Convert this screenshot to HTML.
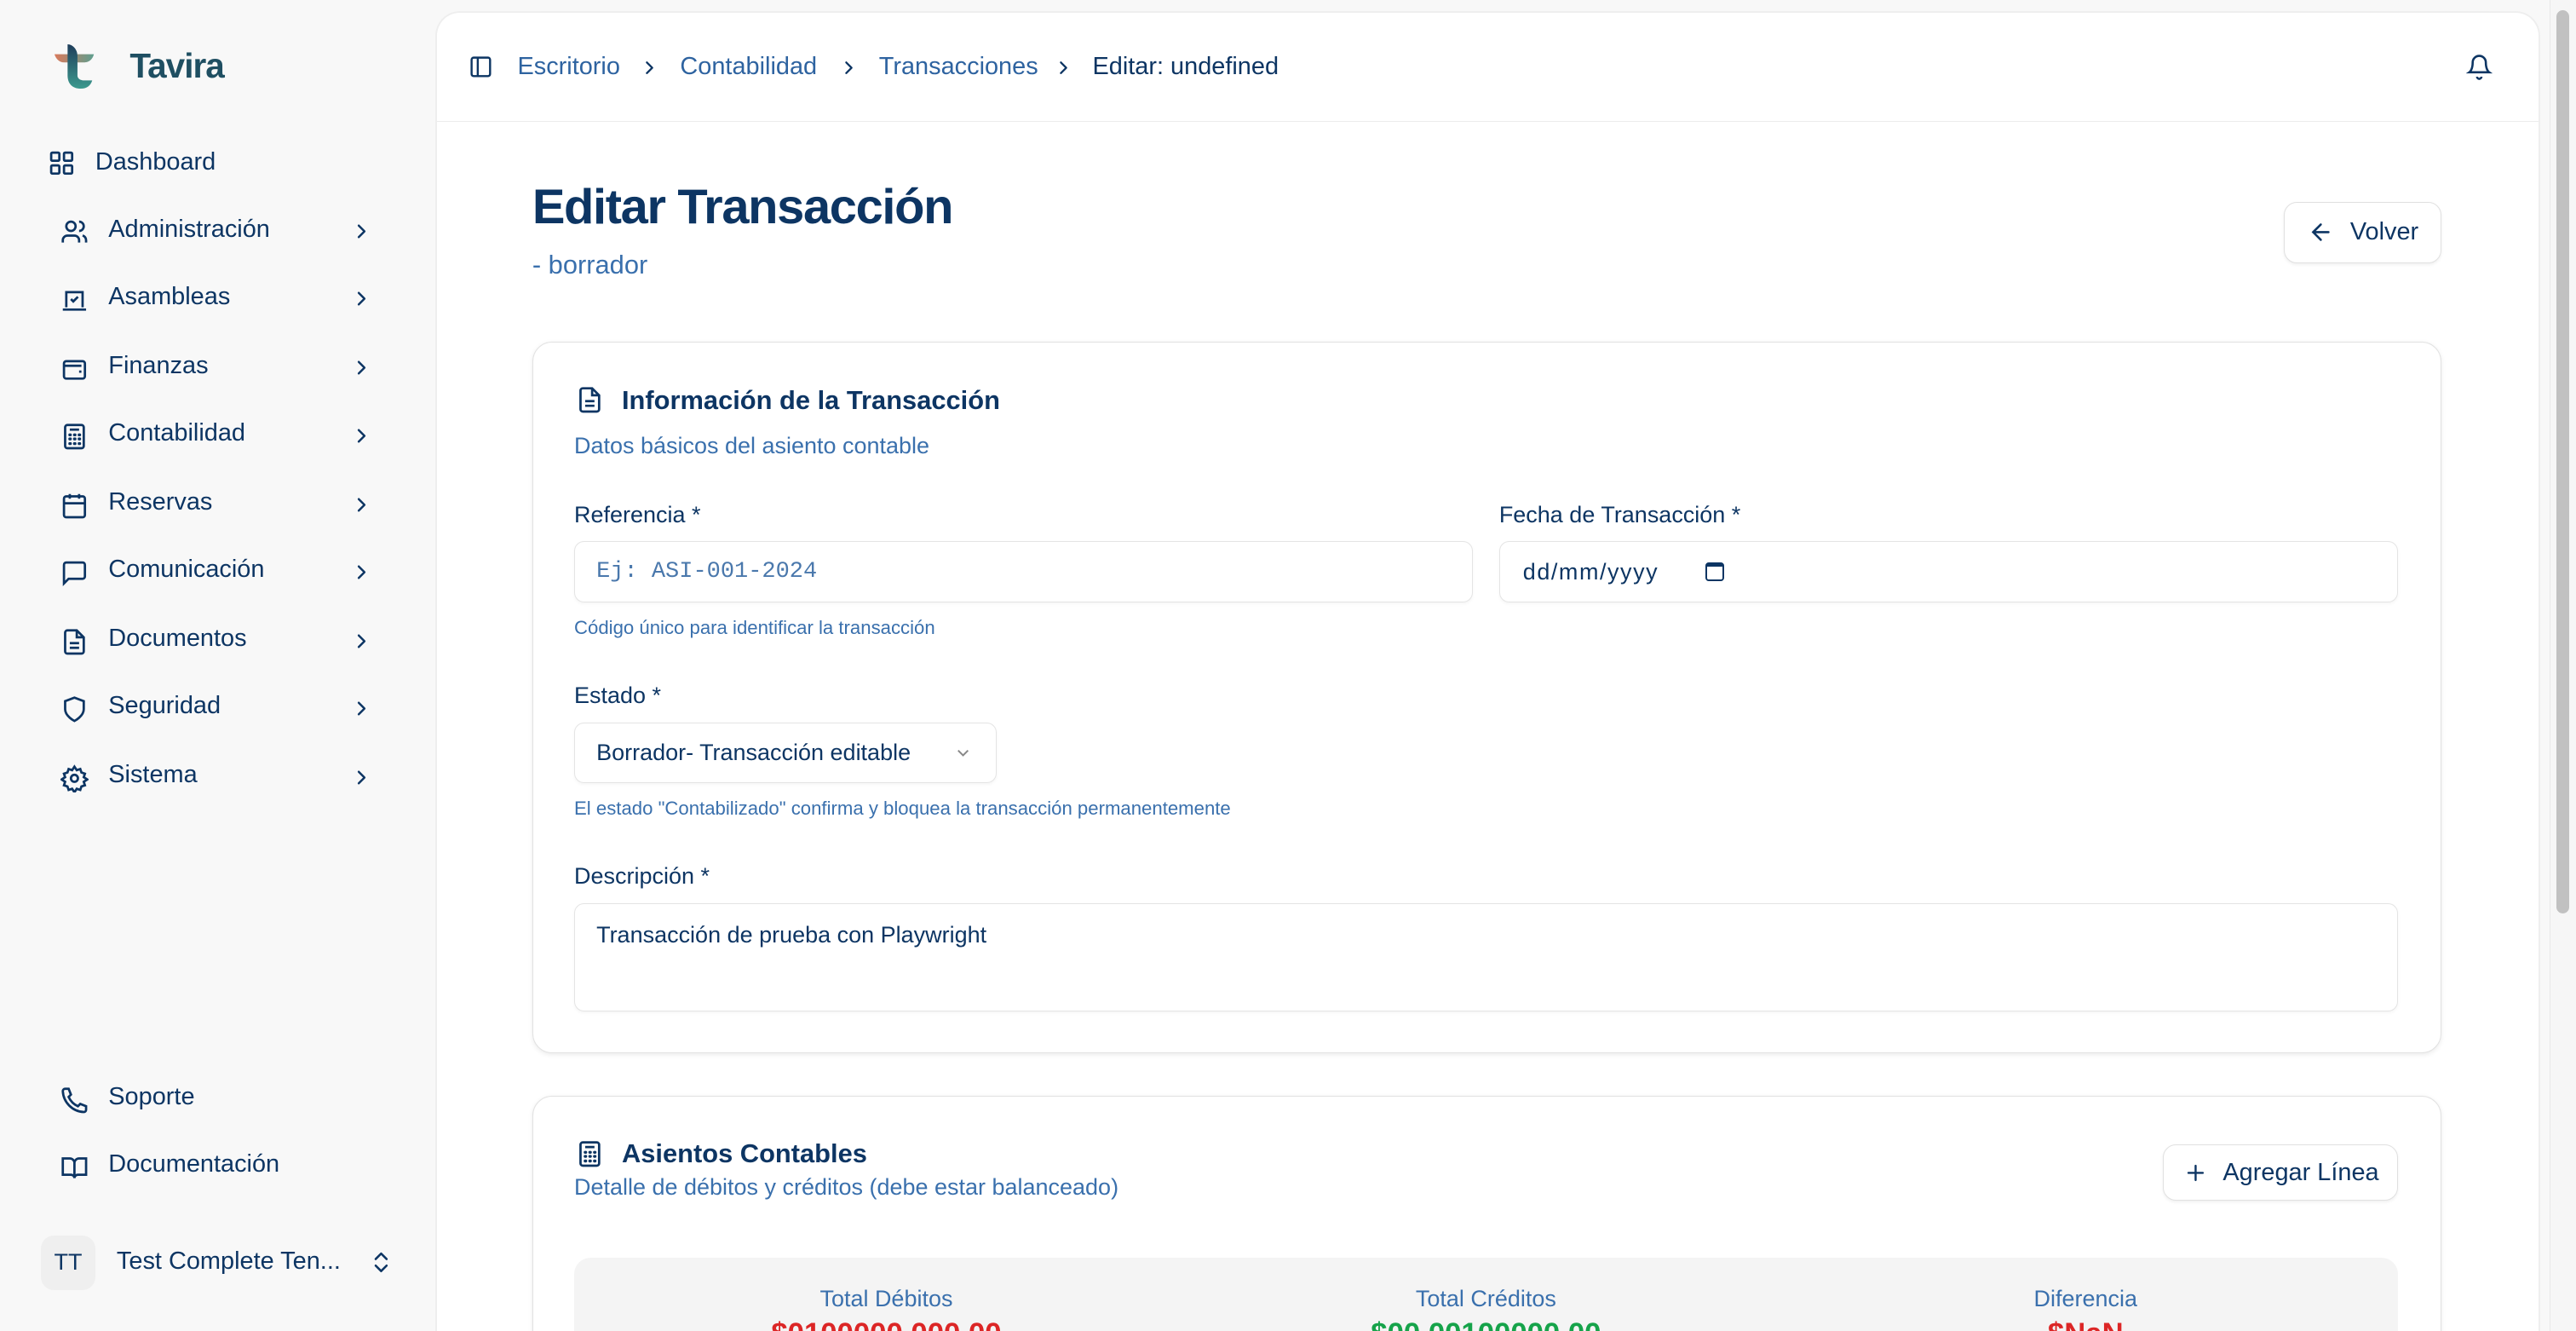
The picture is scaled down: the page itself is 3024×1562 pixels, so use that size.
<!DOCTYPE html>
<html><head><meta charset="utf-8"><style>
*{box-sizing:border-box;margin:0;padding:0}
html,body{width:3024px;height:1562px;overflow:hidden;background:#f8f8f8}
#w{zoom:1.92857;width:1568px;height:810px;position:relative;overflow:hidden;font-family:"Liberation Sans",sans-serif;color:#0d3563}
.side{position:absolute;left:0;top:0;width:265px;height:810px}
.logo{position:absolute;left:32px;top:27px}
.brand{position:absolute;left:79px;top:28px;font-size:21px;font-weight:bold;color:#1f4f62;letter-spacing:-0.5px}
.nav{position:absolute;left:0;font-size:15px;width:265px}
.nav svg{position:absolute;top:2px}
.nav .t{position:absolute;left:66px}
.nav svg.c{left:213px;top:3px}
.main{position:absolute;left:266px;top:8px;width:1279px;height:820px;background:#fff;border-radius:14px;box-shadow:0 0 0 1px #eee}
.top{height:66px;border-bottom:1px solid #ececec;position:relative;font-size:15px}
.bc{position:absolute;top:24px;color:#2e63a0}
.card{position:absolute;left:58px;width:1162px;border:1px solid #e2e2e2;border-radius:12px;box-shadow:0 1px 3px rgba(0,0,0,.08);background:#fff}
.lbl{position:absolute;font-size:14px;color:#0d3563}
.inp{position:absolute;height:37px;border:1px solid #e4e4e4;border-radius:6px;font-size:14px;box-shadow:0 1px 2px rgba(0,0,0,.04)}
.hint{position:absolute;font-size:11.5px;color:#3a70ad}
.btn{position:absolute;border:1px solid #e0e0e0;border-radius:8px;background:#fff;box-shadow:0 1px 2px rgba(0,0,0,.06);font-size:15px}
</style></head><body><div id="w">
<svg width="0" height="0" style="position:absolute"><defs><symbol id="chev" viewBox="0 0 24 24"><path d="M9 6l6 6-6 6" fill="none" stroke="#0d3563" stroke-width="2.2" stroke-linecap="round" stroke-linejoin="round"/></symbol></defs></svg>
<div class="side">
 <svg class="logo" width="26" height="28" viewBox="0 0 26 28"><defs><linearGradient id="g1" x1="0" x2="1"><stop offset="0" stop-color="#d97a5c"/><stop offset="1" stop-color="#5e9e8e"/></linearGradient><linearGradient id="g2" x1="0" y1="0" x2="0" y2="1"><stop offset="0" stop-color="#1e3d5a"/><stop offset="1" stop-color="#3c9a8e"/></linearGradient></defs><path d="M1 6h24c-1 4-4 5-6 5H7C4 11 2 9 1 6z" fill="url(#g1)"/><path d="M9 0c3 0 6 3 6 7v12c0 2 2 3 4 3h5c-1 3-3 5-7 5-5 0-8-3-8-8z" fill="url(#g2)"/></svg>
 <div class="brand">Tavira</div>
 <div class="nav" style="top:90px;height:20px"><svg style="left:29px;top:1px" width="17" height="17" viewBox="0 0 24 24" fill="none" stroke="#0d3563" stroke-width="2"><rect x="3" y="3" width="7" height="7" rx="1"/><rect x="14" y="3" width="7" height="7" rx="1"/><rect x="3" y="14" width="7" height="7" rx="1"/><rect x="14" y="14" width="7" height="7" rx="1"/></svg><span class="t" style="left:58px">Dashboard</span></div>
 <div class="nav" style="top:131px;height:20px"><svg style="left:37px" width="17" height="17" viewBox="0 0 24 24" fill="none" stroke="#0d3563" stroke-width="2"><circle cx="9" cy="7" r="4"/><path d="M2 21v-2a4 4 0 014-4h6a4 4 0 014 4v2M16 3a4 4 0 010 8M22 21v-2a4 4 0 00-3-4"/></svg><span class="t">Administración</span><svg class="c" width="14" height="14"><use href="#chev"/></svg></div>
 <div class="nav" style="top:172px;height:20px"><svg style="left:37px" width="17" height="17" viewBox="0 0 24 24" fill="none" stroke="#0d3563" stroke-width="2"><path d="M5 18V5h14v13M2 20h20M9 11l2 2 4-4"/></svg><span class="t">Asambleas</span><svg class="c" width="14" height="14"><use href="#chev"/></svg></div>
 <div class="nav" style="top:214px;height:20px"><svg style="left:37px" width="17" height="17" viewBox="0 0 24 24" fill="none" stroke="#0d3563" stroke-width="2"><rect x="3" y="5" width="18" height="15" rx="2"/><path d="M3 9h15M16 14h2"/></svg><span class="t">Finanzas</span><svg class="c" width="14" height="14"><use href="#chev"/></svg></div>
 <div class="nav" style="top:255px;height:20px"><svg style="left:37px" width="17" height="17" viewBox="0 0 24 24" fill="none" stroke="#0d3563" stroke-width="2"><rect x="4" y="2" width="16" height="20" rx="2"/><path d="M8 6h8"/><g stroke-width="2.5" stroke-linecap="round"><path d="M8 10.5h.5M12 10.5h.5M16 10.5h.5M8 14h.5M12 14h.5M16 14h.5M8 18h.5M12 18h.5M16 18h.5"/></g></svg><span class="t">Contabilidad</span><svg class="c" width="14" height="14"><use href="#chev"/></svg></div>
 <div class="nav" style="top:297px;height:20px"><svg style="left:37px" width="17" height="17" viewBox="0 0 24 24" fill="none" stroke="#0d3563" stroke-width="2"><rect x="3" y="4" width="18" height="18" rx="2"/><path d="M16 2v4M8 2v4M3 10h18"/></svg><span class="t">Reservas</span><svg class="c" width="14" height="14"><use href="#chev"/></svg></div>
 <div class="nav" style="top:338px;height:20px"><svg style="left:37px" width="17" height="17" viewBox="0 0 24 24" fill="none" stroke="#0d3563" stroke-width="2"><path d="M21 15a2 2 0 01-2 2H7l-4 4V5a2 2 0 012-2h14a2 2 0 012 2z"/></svg><span class="t">Comunicación</span><svg class="c" width="14" height="14"><use href="#chev"/></svg></div>
 <div class="nav" style="top:380px;height:20px"><svg style="left:37px" width="17" height="17" viewBox="0 0 24 24" fill="none" stroke="#0d3563" stroke-width="2"><path d="M14 2H6a2 2 0 00-2 2v16a2 2 0 002 2h12a2 2 0 002-2V8z"/><path d="M14 2v6h6M8 13h8M8 17h8"/></svg><span class="t">Documentos</span><svg class="c" width="14" height="14"><use href="#chev"/></svg></div>
 <div class="nav" style="top:421px;height:20px"><svg style="left:37px" width="17" height="17" viewBox="0 0 24 24" fill="none" stroke="#0d3563" stroke-width="2"><path d="M12 22s8-4 8-10V5l-8-3-8 3v7c0 6 8 10 8 10z"/></svg><span class="t">Seguridad</span><svg class="c" width="14" height="14"><use href="#chev"/></svg></div>
 <div class="nav" style="top:463px;height:20px"><svg style="left:37px" width="17" height="17" viewBox="0 0 24 24" fill="none" stroke="#0d3563" stroke-width="2"><circle cx="12" cy="12" r="3"/><path d="M12 2l2 3 3-1 1 3 3 1-1 3 3 2-3 2 1 3-3 1-1 3-3-1-2 3-2-3-3 1-1-3-3-1 1-3-3-2 3-2-1-3 3-1 1-3 3 1z"/></svg><span class="t">Sistema</span><svg class="c" width="14" height="14"><use href="#chev"/></svg></div>
 <div class="nav" style="top:659px;height:20px"><svg style="left:37px" width="17" height="17" viewBox="0 0 24 24" fill="none" stroke="#0d3563" stroke-width="2"><path d="M22 17v3a2 2 0 01-2 2A19 19 0 012 4a2 2 0 012-2h3l2 5-2 2a16 16 0 008 8l2-2 5 2z"/></svg><span class="t">Soporte</span></div>
 <div class="nav" style="top:700px;height:20px"><svg style="left:37px" width="17" height="17" viewBox="0 0 24 24" fill="none" stroke="#0d3563" stroke-width="2"><path d="M2 4h6a4 4 0 014 4v13a3 3 0 00-3-3H2zM22 4h-6a4 4 0 00-4 4v13a3 3 0 013-3h7z"/></svg><span class="t">Documentación</span></div>
 <div style="position:absolute;left:25px;top:752px;width:33px;height:33px;border-radius:8px;background:#efefef;font-size:14px;text-align:center;line-height:33px">TT</div>
 <div style="position:absolute;left:71px;top:759px;font-size:15px">Test Complete Ten...</div>
 <svg style="position:absolute;left:224px;top:760px" width="16" height="16" viewBox="0 0 24 24" fill="none" stroke="#0d3563" stroke-width="2" stroke-linecap="round" stroke-linejoin="round"><path d="M7 9l5-5 5 5M7 15l5 5 5-5"/></svg>
</div>
<div class="main">
 <div class="top">
  <svg style="position:absolute;left:19px;top:25px" width="15" height="15" viewBox="0 0 24 24" fill="none" stroke="#0d3563" stroke-width="2"><rect x="3" y="3" width="18" height="18" rx="2"/><path d="M9 3v18"/></svg>
  <span class="bc" style="left:49px">Escritorio</span><svg style="position:absolute;left:123px;top:27px" width="13" height="13"><use href="#chev"/></svg>
  <span class="bc" style="left:148px">Contabilidad</span><svg style="position:absolute;left:244px;top:27px" width="13" height="13"><use href="#chev"/></svg>
  <span class="bc" style="left:269px">Transacciones</span><svg style="position:absolute;left:375px;top:27px" width="13" height="13"><use href="#chev"/></svg>
  <span class="bc" style="left:399px;color:#0d3563">Editar: undefined</span>
  <svg style="position:absolute;left:1235px;top:24px" width="16" height="17" viewBox="0 0 24 24" fill="none" stroke="#0d3563" stroke-width="2"><path d="M6 8a6 6 0 0112 0c0 7 3 9 3 9H3s3-2 3-9M10 21a2 2 0 004 0"/></svg>
 </div>
 <div style="position:absolute;left:58px;top:101px;font-size:30px;font-weight:bold;letter-spacing:-0.7px">Editar Transacción</div>
 <div style="position:absolute;left:58px;top:144px;font-size:16px;color:#3a70ad">- borrador</div>
 <div class="btn" style="left:1124px;top:115px;width:96px;height:37px"><svg style="position:absolute;left:14px;top:10px" width="16" height="16" viewBox="0 0 24 24" fill="none" stroke="#0d3563" stroke-width="2" stroke-linecap="round"><path d="M19 12H5M12 19l-7-7 7-7"/></svg><span style="position:absolute;left:40px;top:9px">Volver</span></div>
 <div class="card" style="top:200px;height:433px">
  <svg style="position:absolute;left:26px;top:26px" width="17" height="18" viewBox="0 0 24 24" fill="none" stroke="#0d3563" stroke-width="2"><path d="M14 2H6a2 2 0 00-2 2v16a2 2 0 002 2h12a2 2 0 002-2V8z"/><path d="M14 2v6h6M8 13h8M8 17h8"/></svg>
  <div style="position:absolute;left:54px;top:26px;font-size:16px;font-weight:bold">Información de la Transacción</div>
  <div style="position:absolute;left:25px;top:55px;font-size:14px;color:#3a70ad">Datos básicos del asiento contable</div>
  <div class="lbl" style="left:25px;top:97px">Referencia *</div>
  <div class="inp" style="left:25px;top:121px;width:547px;padding:10px 13px;font-family:'Liberation Mono',monospace;color:#4a78ac">Ej: ASI-001-2024</div>
  <div class="hint" style="left:25px;top:167px">Código único para identificar la transacción</div>
  <div class="lbl" style="left:588px;top:97px">Fecha de Transacción *</div>
  <div class="inp" style="left:588px;top:121px;width:547px;padding:10px 14px;letter-spacing:0.8px">dd/mm/yyyy <span style="display:inline-block;width:11px;height:11px;border:1.5px solid #0d3563;border-top-width:3px;border-radius:2px;margin-left:24px;vertical-align:-1px"></span></div>
  <div class="lbl" style="left:25px;top:207px">Estado *</div>
  <div class="inp" style="left:25px;top:231px;width:257px;padding:10px 13px">Borrador- Transacción editable <svg style="position:absolute;right:14px;top:12px" width="12" height="12" viewBox="0 0 24 24" fill="none" stroke="#888" stroke-width="2"><path d="M6 9l6 6 6-6"/></svg></div>
  <div class="hint" style="left:25px;top:277px">El estado "Contabilizado" confirma y bloquea la transacción permanentemente</div>
  <div class="lbl" style="left:25px;top:317px">Descripción *</div>
  <div class="inp" style="left:25px;top:341px;width:1110px;height:66px;padding:11px 13px">Transacción de prueba con Playwright</div>
 </div>
 <div class="card" style="top:659px;height:200px">
  <svg style="position:absolute;left:26px;top:25px" width="17" height="19" viewBox="0 0 24 24" fill="none" stroke="#0d3563" stroke-width="2"><rect x="4" y="2" width="16" height="20" rx="2"/><path d="M8 6h8"/><g stroke-width="2.5" stroke-linecap="round"><path d="M8 10.5h.5M12 10.5h.5M16 10.5h.5M8 14h.5M12 14h.5M16 14h.5M8 18h.5M12 18h.5M16 18h.5"/></g></svg>
  <div style="position:absolute;left:54px;top:25px;font-size:16px;font-weight:bold">Asientos Contables</div>
  <div style="position:absolute;left:25px;top:47px;font-size:14px;color:#3a70ad">Detalle de débitos y créditos (debe estar balanceado)</div>
  <div class="btn" style="left:992px;top:29px;width:143px;height:34px"><svg style="position:absolute;left:12px;top:9px" width="15" height="15" viewBox="0 0 24 24" fill="none" stroke="#0d3563" stroke-width="2" stroke-linecap="round"><path d="M12 5v14M5 12h14"/></svg><span style="position:absolute;left:36px;top:8px">Agregar Línea</span></div>
  <div style="position:absolute;left:25px;top:98px;width:1110px;height:100px;background:#f4f4f4;border-radius:10px">
   <div style="position:absolute;left:0;width:380px;top:17px;text-align:center;font-size:14px;color:#3a70ad">Total Débitos</div>
   <div style="position:absolute;left:0;width:380px;top:36px;text-align:center;font-size:18px;font-weight:bold;color:#dc2626">$0100000.000.00</div>
   <div style="position:absolute;left:365px;width:380px;top:17px;text-align:center;font-size:14px;color:#3a70ad">Total Créditos</div>
   <div style="position:absolute;left:365px;width:380px;top:36px;text-align:center;font-size:18px;font-weight:bold;color:#16a34a">$00.00100000.00</div>
   <div style="position:absolute;left:730px;width:380px;top:17px;text-align:center;font-size:14px;color:#3a70ad">Diferencia</div>
   <div style="position:absolute;left:730px;width:380px;top:36px;text-align:center;font-size:18px;font-weight:bold;color:#dc2626">$NaN</div>
  </div>
 </div>
</div>
<div style="position:absolute;left:1552px;top:0;width:16px;height:810px;background:#f6f6f6;border-left:1px solid #e8e8e8"></div>
<div style="position:absolute;left:1556px;top:6px;width:8px;height:550px;background:#c1c1c1;border-radius:4px"></div>
</div></body></html>
